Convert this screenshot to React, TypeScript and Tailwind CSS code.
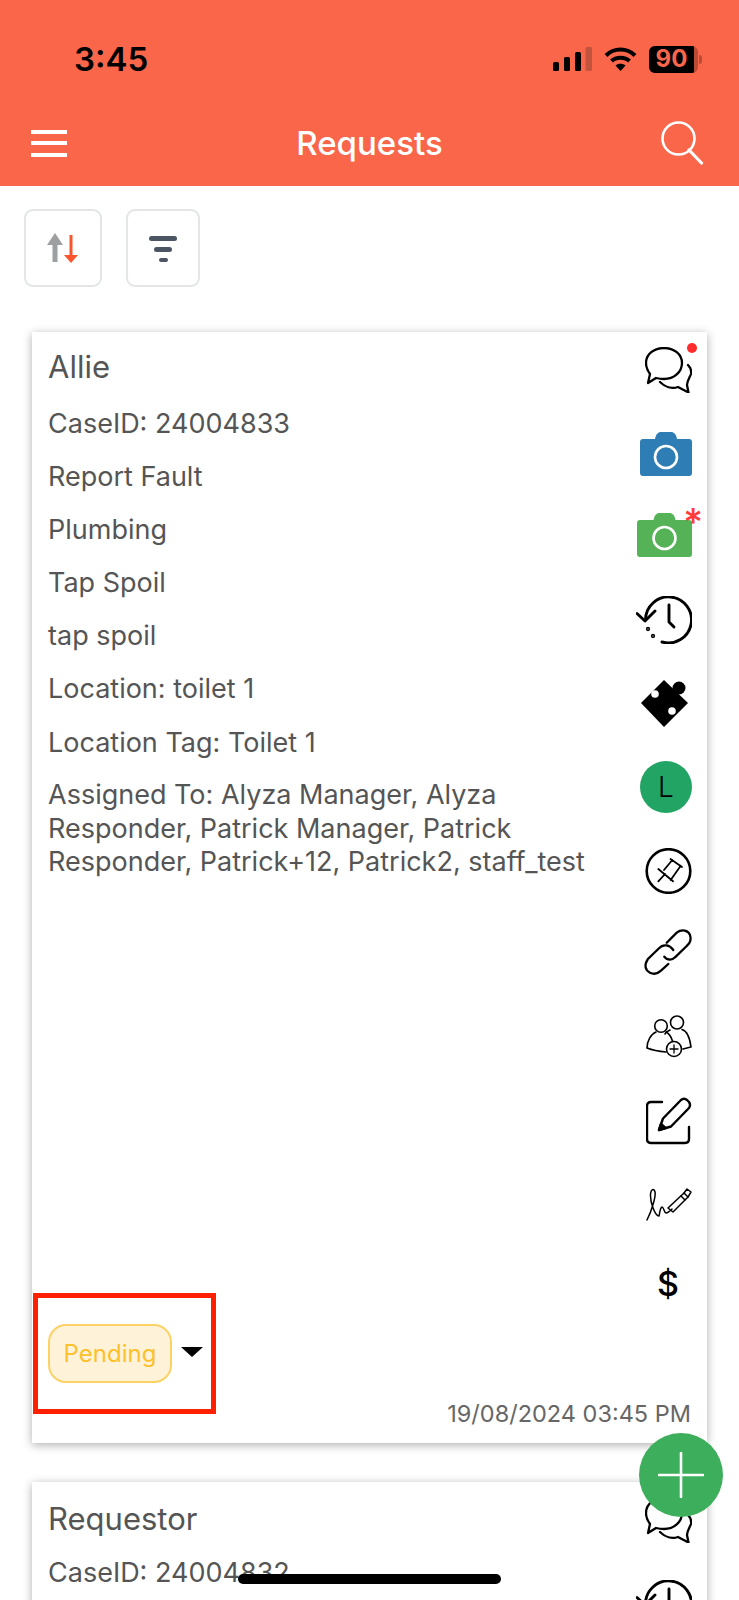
const detailLines = [
  "CaseID: 24004833",
  "Report Fault",
  "Plumbing",
  "Tap Spoil",
  "tap spoil",
  "Location: toilet 1",
  "Location Tag: Toilet 1",
];

function ChatIcon() {
  return (
    <svg width="47" height="46" viewBox="0 0 47 46" fill="none" stroke="#000" strokeWidth="2.3" strokeLinejoin="round" strokeLinecap="round">
      <path d="M3 36 L5 27 C2 23 1 20 1 16 C1 7 9 1 19 1 C29 1 37 7 37 16 C37 25 29 32 19 32 C16 32 13 31.5 11 31 Z" />
      <path d="M43 18 C46 21 46.5 24 46 27 C45 30 42.5 33 42 38 L43.5 45.5 L33 40 C27 42 20 40 15 35" />
    </svg>
  );
}

function CameraIcon({ color, width }: { color: string; width: number }) {
  const cx = width / 2;
  return (
    <svg width={width} height="44" viewBox={`0 0 ${width} 44`}>
      <path
        d={`M3 7 H${cx - 11} C${cx - 10} 2 ${cx - 8} 0 ${cx - 5} 0 H${cx + 5} C${cx + 8} 0 ${cx + 10} 2 ${cx + 11} 7 H${width - 3} Q${width} 7 ${width} 10 V41 Q${width} 44 ${width - 3} 44 H3 Q0 44 0 41 V10 Q0 7 3 7 Z`}
        fill={color}
      />
      <circle cx={cx} cy="25" r="11" fill="none" stroke="#fff" strokeWidth="2.6" />
    </svg>
  );
}

function HistoryIcon() {
  return (
    <svg width="56" height="48" viewBox="0 0 56 48" fill="none" stroke="#000" strokeWidth="2.9" strokeLinecap="round" strokeLinejoin="round">
      <path d="M9.5 24 A23 23 0 1 1 26 46" />
      <path d="M1 17.5 L9 25 L19 15" />
      <path d="M33 9 V26 L38 31" />
      <circle cx="12" cy="33" r="0.7" fill="#000" />
      <circle cx="17" cy="40" r="0.7" fill="#000" />
    </svg>
  );
}

function PuzzleIcon() {
  return (
    <svg width="48" height="47" viewBox="0 0 48 47">
      <polygon points="0,23 23,0 47,23 23,47" fill="#000" />
      <circle cx="38" cy="8" r="6.5" fill="#000" />
      <circle cx="14" cy="14" r="3.8" fill="#fff" />
      <circle cx="31" cy="31" r="3.8" fill="#fff" />
    </svg>
  );
}

function PinIcon() {
  return (
    <svg width="47" height="46" viewBox="0 0 47 46" fill="none" stroke="#000" strokeLinecap="round" strokeLinejoin="round">
      <circle cx="23.5" cy="23" r="21.8" strokeWidth="2.6" />
      <path d="M13.3 21 L28 33.3 M13.3 33.3 L20 26 M19 22 L27.3 12 M25.7 32 L35.7 17.7 M25.5 11 L37 19" strokeWidth="1.8" />
    </svg>
  );
}

function ChainIcon() {
  return (
    <svg width="47" height="47" viewBox="0 0 47 47" fill="none" stroke="#000" strokeWidth="2.3" strokeLinecap="round" className="overflow-visible">
      <path d="M21.7 12.7 L31.7 2.7 C36.7 -1 43.3 0 45 5 C46.7 10 45 13.3 41.7 16 L30 27.3 C26.7 30.7 21.7 30 19.3 26.7" />
      <path d="M28.3 20 C25 15 18.3 13.3 14 18.3 L2.7 29.3 C-1 35 0 40 5 42.7 C10 45 13.3 43.3 16 40.7 L23.3 34" />
    </svg>
  );
}

function UsersAddIcon() {
  return (
    <svg width="46" height="44" viewBox="0 0 46 44" fill="none" stroke="#000" strokeWidth="1.6" strokeLinecap="round">
      <circle cx="31" cy="7.5" r="6.5" />
      <circle cx="15" cy="11" r="6.3" />
      <path d="M24 15 C21 16.5 19.5 17.5 19 19" />
      <path d="M36 14.5 C41 16 44 24 45 32 L37 34" />
      <path d="M10 17 C5 19 1 26 1 33 C6 35 14 36.5 20 37" />
      <path d="M20 17 C22 18 25 21 26.5 26" />
      <circle cx="28" cy="34" r="7.5" />
      <path d="M28 30 V38 M24 34 H32" strokeWidth="1.3" />
    </svg>
  );
}

function EditIcon() {
  return (
    <svg width="46" height="48" viewBox="0 0 46 48" fill="none" stroke="#000" strokeWidth="2.4" strokeLinecap="round" strokeLinejoin="round">
      <path d="M16 5 H5 Q1 5 1 9 V42 Q1 46 5 46 H39 Q43 46 43 42 V30" />
      <path d="M17 21.5 L35 3 Q38 0.5 41 3 L43 5 Q45 8 43 11 L25 29.5 L13 33 Z" />
      <path d="M15 27 L13 33 L19.5 31 Z" fill="#000" />
    </svg>
  );
}

function SignatureIcon() {
  return (
    <svg width="46" height="36" viewBox="0 0 46 36" fill="none" stroke="#000" strokeWidth="1.5" strokeLinecap="round" strokeLinejoin="round">
      <path d="M1 34 C6 24 10 10 9 6 C8 2 5 3 4.5 8 C4 16 9 30 13 30 C14 26 14 22 16 21 C18 21 18 27 20 27 C22 27 24 25 26 23" />
      <path d="M22 22 L38 7 L42 11 L27 26 Z" />
      <path d="M38 7 L41 3 L45 6 L42 11 M35 10 L39 14" />
    </svg>
  );
}

function IconRow({ children }: { children: React.ReactNode }) {
  return <div className="relative flex h-[83.4px] w-full shrink-0 items-center justify-end">{children}</div>;
}

function FirstCard() {
  return (
    <div className="flex h-[1111px] flex-col bg-white shadow-[0_2px_9px_rgba(0,0,0,0.32)]">
      <div className="flex h-[992px] pl-4 pr-[15px]">
        <div className="flex-1 pt-[16px] text-[#555]">
          <h2 className="text-[31px] leading-[38px]">Allie</h2>
          <div className="mt-[20.5px]">
            {detailLines.map((line) => (
              <p key={line} className="h-[53.2px] text-[27px] leading-[33px]">
                {line}
              </p>
            ))}
          </div>
          <p className="mt-[-0.5px] whitespace-nowrap text-[27px] leading-[33.4px]">
            Assigned To: Alyza Manager, Alyza
            <br />
            Responder, Patrick Manager, Patrick
            <br />
            Responder, Patrick+12, Patrick2, staff_test
          </p>
        </div>
        <div className="mt-[-3.5px] flex w-[60px] flex-col">
          <IconRow>
            <ChatIcon />
            <span className="absolute right-[-5px] top-[14px] h-[10px] w-[10px] rounded-full bg-[#ff2d2d]" />
          </IconRow>
          <IconRow>
            <CameraIcon color="#2e7eb5" width={52} />
          </IconRow>
          <IconRow>
            <div className="mt-[-3px]">
              <CameraIcon color="#55b257" width={55} />
            </div>
            <span className="absolute right-[-11px] top-[8px] text-[38px] font-medium leading-[38px] text-[#ff3b3b]">*</span>
          </IconRow>
          <IconRow>
            <HistoryIcon />
          </IconRow>
          <IconRow>
            <div className="mr-[3px]">
              <PuzzleIcon />
            </div>
          </IconRow>
          <IconRow>
            <div className="flex h-[52px] w-[52px] items-center justify-center rounded-full bg-[#21a464] text-[28px] font-light text-black">L</div>
          </IconRow>
          <IconRow>
            <PinIcon />
          </IconRow>
          <IconRow>
            <ChainIcon />
          </IconRow>
          <IconRow>
            <UsersAddIcon />
          </IconRow>
          <IconRow>
            <EditIcon />
          </IconRow>
          <IconRow>
            <SignatureIcon />
          </IconRow>
          <IconRow>
            <span className="mb-[6px] mr-[13px] text-[34px] font-medium leading-none text-black">$</span>
          </IconRow>
        </div>
      </div>
      <div className="relative flex items-center pl-4">
        <div className="flex h-[59px] w-[124px] items-center justify-center rounded-[18px] border-2 border-[#fcd265] bg-[#fef3d9] text-[24px] text-[#fcc02d]">
          Pending
        </div>
        <span className="ml-[9px] mt-[-4px] h-0 w-0 border-x-[11px] border-t-[10px] border-x-transparent border-t-black" />
        <div className="absolute left-[1px] top-[-31px] h-[121px] w-[183px] border-[5px] border-[#ff2000]" />
      </div>
      <p className="mt-[16px] pr-4 text-right text-[23.5px] leading-[30px] text-[#666]">19/08/2024 03:45 PM</p>
    </div>
  );
}

function SecondCard() {
  return (
    <div className="mt-[39px] flex h-[300px] bg-white pl-4 pr-[15px] shadow-[0_2px_9px_rgba(0,0,0,0.32)]">
      <div className="flex-1 pt-[18px] text-[#555]">
        <h2 className="text-[31px] leading-[38px]">Requestor</h2>
        <p className="mt-[18px] text-[27px] leading-[33px]">CaseID: 24004832</p>
      </div>
      <div className="mt-[-3.5px] flex w-[60px] flex-col">
        <IconRow>
          <ChatIcon />
        </IconRow>
        <IconRow>
          <HistoryIcon />
        </IconRow>
      </div>
    </div>
  );
}

export default function App() {
  return (
    <div className="relative h-[1600px] w-[739px] overflow-hidden bg-white font-['Inter',sans-serif]">
      <header className="h-[186px] bg-[#f9664a]">
        <div className="flex h-[116px] items-center justify-between pl-[74px] pr-[37px] pt-[2px]">
          <span className="text-[33px] font-semibold leading-none text-black">3:45</span>
          <div className="flex items-center gap-[12px]">
            <svg width="39" height="24" viewBox="0 0 39 24">
              <rect x="0" y="15" width="6" height="9" rx="1.5" fill="#000" />
              <rect x="11" y="10" width="6" height="14" rx="1.5" fill="#000" />
              <rect x="22" y="5" width="6" height="19" rx="1.5" fill="#000" />
              <rect x="32.5" y="0" width="6.5" height="24" rx="1.5" fill="#c2533c" />
            </svg>
            <svg width="33" height="24" viewBox="0 0 33 24" fill="none" stroke="#000" strokeLinecap="butt">
              <path d="M2 8.5 C10 0.5 23 0.5 31 8.5" strokeWidth="4" />
              <path d="M7.5 14 C12 9.5 21 9.5 25.5 14" strokeWidth="4" />
              <path d="M16.5 24 L11.5 18.5 C14 16 19 16 21.5 18.5 Z" fill="#000" stroke="none" />
            </svg>
            <div className="flex items-center">
              <div className="flex h-[27px] w-[49px] overflow-hidden rounded-[6px] bg-[#b84c35]">
                <div className="flex w-[45px] items-center justify-center bg-black text-[24px] font-bold leading-none text-[#f9664a]">90</div>
              </div>
              <span className="ml-[1px] h-[9px] w-[3px] rounded-r-full bg-[#b84c35]" />
            </div>
          </div>
        </div>
        <div className="flex h-[54px] items-center pl-[31px] pr-[35px]">
          <div className="flex-1">
            <div className="flex w-[36px] flex-col gap-[7.5px]">
              <span className="h-[4px] bg-white" />
              <span className="h-[4px] bg-white" />
              <span className="h-[4px] bg-white" />
            </div>
          </div>
          <h1 className="ml-[4px] text-[33px] font-medium leading-none text-white">Requests</h1>
          <div className="flex flex-1 justify-end">
            <svg width="44" height="44" viewBox="0 0 44 44" fill="none" stroke="#fff" strokeLinecap="round">
              <circle cx="18.5" cy="17.5" r="16" strokeWidth="2.6" />
              <path d="M29 29 L41.5 42" strokeWidth="3.2" />
            </svg>
          </div>
        </div>
      </header>

      <div className="flex gap-[24px] pl-[24px] pt-[23px]">
        <button className="flex h-[78px] w-[78px] items-center justify-center rounded-[9px] border-2 border-[#e3e5e9]">
          <svg width="32" height="30" viewBox="0 0 32 30">
            <path d="M8 0 L16 12 H10.5 V29 H5.5 V12 H0 Z" fill="#9ca0a3" />
            <path d="M22.5 2 H25.5 V22 H31 L24 30 L17 22 H22.5 Z" fill="#f9562e" />
          </svg>
        </button>
        <button className="flex h-[78px] w-[74px] flex-col items-center justify-center gap-[6px] rounded-[9px] border-2 border-[#e3e5e9] pt-[1px]">
          <span className="h-[5px] w-[28px] rounded-full bg-[#4b5563]" />
          <span className="h-[5px] w-[18px] rounded-full bg-[#4b5563]" />
          <span className="h-[4px] w-[9px] rounded-full bg-[#4b5563]" />
        </button>
      </div>

      <main className="ml-[32px] mr-[32px] mt-[45px]">
        <FirstCard />
        <SecondCard />
      </main>

      <button className="absolute left-[639px] top-[1433px] flex h-[84px] w-[84px] items-center justify-center rounded-full bg-[#3dae5c]">
        <svg width="46" height="46" viewBox="0 0 46 46" stroke="#fff" strokeWidth="2.6" strokeLinecap="round">
          <path d="M23 1 V45 M1 23 H45" />
        </svg>
      </button>
      <div className="absolute left-[238px] top-[1574px] h-[10px] w-[263px] rounded-full bg-black" />
    </div>
  );
}
